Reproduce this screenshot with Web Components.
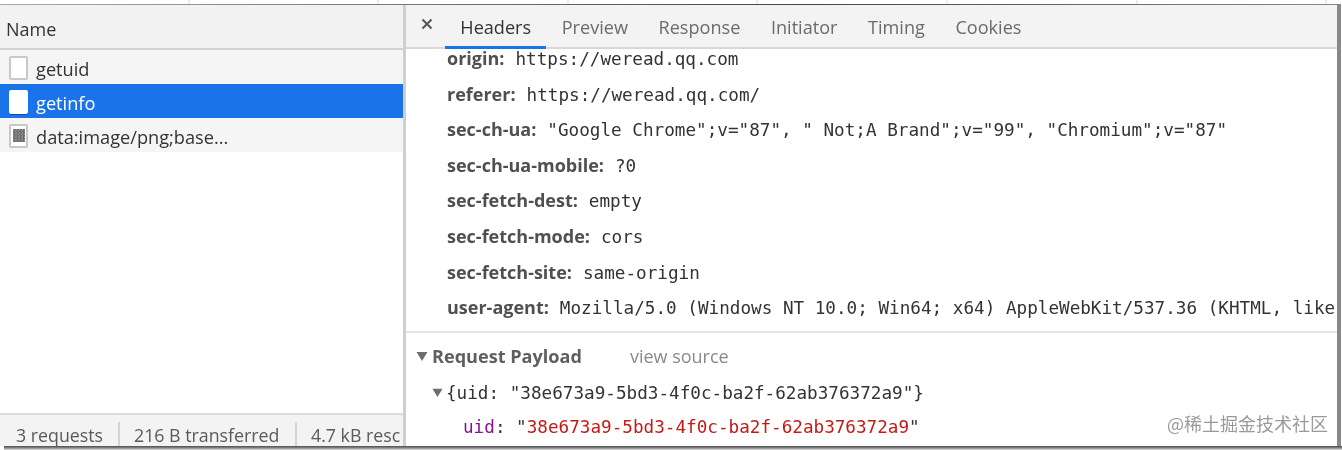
<!DOCTYPE html>
<html lang="zh"><head><meta charset="utf-8"><title>Network</title>
<style>
html,body{margin:0;padding:0;background:#fff;overflow:hidden}
body{width:1342px;height:450px;font-family:"Open Sans","Noto Sans",sans-serif}
</style></head><body>
<dt-window>
  <dt-list slot="list">
    <dt-row>getuid</dt-row>
    <dt-row selected>getinfo</dt-row>
    <dt-row kind="image">data:image/png;base...</dt-row>
  </dt-list>
  <dt-details slot="details">
    <dt-tabs></dt-tabs>
    <dt-headers>
      <dt-header name="origin">https://weread.qq.com</dt-header>
      <dt-header name="referer">https://weread.qq.com/</dt-header>
      <dt-header name="sec-ch-ua">"Google Chrome";v="87", " Not;A Brand";v="99", "Chromium";v="87"</dt-header>
      <dt-header name="sec-ch-ua-mobile">?0</dt-header>
      <dt-header name="sec-fetch-dest">empty</dt-header>
      <dt-header name="sec-fetch-mode">cors</dt-header>
      <dt-header name="sec-fetch-site">same-origin</dt-header>
      <dt-header name="user-agent">Mozilla/5.0 (Windows NT 10.0; Win64; x64) AppleWebKit/537.36 (KHTML, like</dt-header>
    </dt-headers>
    <dt-payload></dt-payload>
  </dt-details>
</dt-window>
<script>
const def=(name,html,init)=>customElements.define(name,class extends HTMLElement{
  constructor(){super();this.attachShadow({mode:'open'}).innerHTML=html;}
  connectedCallback(){init&&init.call(this,this.shadowRoot);}
});
const TRI=(s)=>`<svg width="${s}" height="${s}" viewBox="0 0 12 12"><path d="M0.5 2H11.5L6 11Z" fill="#6e6e6e"/></svg>`;

def('dt-window',`<style>
:host{display:flex;flex-direction:column;width:1342px;height:450px;position:relative;overflow:hidden;background:#fff;color:#333;filter:blur(.35px)}
.ruler{height:4px;display:flex;flex:none}
.ruler i{display:block;border-right:2px solid #ececec;height:4px;box-sizing:border-box;width:189.6px;flex:none}
.main{flex:1;min-height:0;display:flex;margin-right:1px;border-top:1px solid #d4d4d4;border-right:4px solid;border-image:linear-gradient(90deg,#aaa,#444 60%,#888) 1}
.left{width:403px;flex:none;display:flex}
.split{width:3px;flex:none;background:#cfcfcf}
.right{flex:1;min-width:0;display:flex}
.shadow{height:4px;flex:none;margin-left:4px;background:linear-gradient(#4a4a4a,#8a8a8a 50%,#e0e0e0)}
.mark{position:absolute;right:14px;top:410px;font:18px "Noto Sans CJK SC","Noto Sans",sans-serif;color:#9a9a9a;white-space:nowrap}
::slotted(*){flex:1;min-width:0}
</style>
<div class="ruler"><i></i><i></i><i></i><i></i><i></i><i></i><i></i></div>
<div class="main"><div class="left"><slot name="list"></slot></div><div class="split"></div><div class="right"><slot name="details"></slot></div></div>
<div class="shadow"></div>
<div class="mark">@稀土掘金技术社区</div>`);

def('dt-list',`<style>
:host{display:flex;flex-direction:column;background:#fff;min-width:0}
.head{height:39px;flex:none;background:#f2f2f2;border-bottom:2px solid #d2d2d2;display:flex;align-items:center;padding:4px 0 0 6px;font-size:18px;color:#333}
.rows{flex:1;min-height:0}
.foot{height:33px;flex:none;box-sizing:border-box;border-top:2px solid #dcdcdc;background:#f3f3f3;display:flex;align-items:flex-end;font-size:17.8px;line-height:27px;color:#5a5a5a;white-space:nowrap;overflow:hidden}
.foot span{box-sizing:border-box;height:24px;border-left:2px solid #d4d4d4;padding-left:14px}
.foot span:nth-child(1){width:118px;padding-left:16px;border:0}
.foot span:nth-child(2){width:177px}
.foot span:nth-child(3){flex:1}
</style>
<div class="head">Name</div><div class="rows"><slot></slot></div>
<div class="foot"><span>3 requests</span><span>216 B transferred</span><span>4.7 kB resc</span></div>`);

def('dt-row',`<style>
:host{display:flex;align-items:center;gap:8px;height:34px;box-sizing:border-box;padding:1px 0 0 9px;font-size:18.2px;background:#f5f5f5;color:#333}
:host([selected]){background:#1a73e8;color:#fff}
.ic{width:19px;height:24px;box-sizing:border-box;background:#fff;border:2px solid #c8c8c8;border-radius:2px;display:flex;align-items:center;justify-content:center;flex:none}
:host([selected]) .ic{border-color:#fff;box-shadow:0 1px 0 #0f4fa8}
.ic i{display:none;width:12px;height:13px;background:repeating-conic-gradient(#6c6c6c 0 25%,#8a8a8a 0 50%) 0 0/3px 3px}
:host([kind=image]) .ic i{display:block}
.tx{padding-top:2px}
</style><div class="ic"><i></i></div><div class="tx"><slot></slot></div>`);

def('dt-details',`<style>:host{display:flex;flex-direction:column;min-width:0;overflow:hidden;background:#fff}</style><slot></slot>`);

def('dt-tabs',`<style>
:host{display:flex;align-items:stretch;height:42px;flex:none;background:#f3f3f3;border-bottom:2px solid #d8d8d8;font-size:18.1px;color:#6b6b6b}
.x{width:39px;box-sizing:border-box;padding:0 0 4px 15px;display:flex;align-items:center}
.t{padding:2px 15.3px 0;display:flex;align-items:center;position:relative}
.on{color:#333}
.on::after{content:"";position:absolute;left:0;right:0;bottom:-2px;height:3px;background:#1a73e8}
</style>
<div class="x"><svg width="12" height="12" viewBox="0 0 12 12"><path d="M1.5 1.5L10.5 10.5M10.5 1.5L1.5 10.5" stroke="#555" stroke-width="2"/></svg></div>
<div class="t on">Headers</div><div class="t">Preview</div><div class="t">Response</div><div class="t">Initiator</div><div class="t">Timing</div><div class="t">Cookies</div>`);

def('dt-headers',`<style>
:host{display:block;height:284px;flex:none;box-sizing:border-box;padding-left:41px;border-bottom:2px solid #e4e4e4}
.scroll{margin-top:-7px}
</style><div class="scroll"><slot></slot></div>`);

def('dt-header',`<style>
:host{display:block;height:35.6px;line-height:35.6px;white-space:nowrap}
b{font:700 18px "Open Sans","Noto Sans",sans-serif;color:#505050;margin-right:11px}
span{font:17.65px "DejaVu Sans Mono",monospace;color:#333}
</style><b></b><span><slot></slot></span>`,function(r){r.querySelector('b').textContent=this.getAttribute('name')+':';});

def('dt-payload',`<style>
:host{display:block;padding:5px 0 0 10px;white-space:nowrap}
.h{display:flex;align-items:center;height:35px;gap:4px;font:700 18.1px "Open Sans",sans-serif;color:#5f5f5f}
.h em{font:400 18px "Open Sans",sans-serif;color:#8a8a8a;margin-left:44px}
.l{display:flex;align-items:center;height:35px;font:17.65px "DejaVu Sans Mono",monospace;color:#333}
.o{padding-left:16px;gap:3px;margin-top:2px}
.u{padding-left:47px;height:33px}
.k{color:#881391}.s{color:#c41a16}
</style>
<div class="h">${TRI(12)}<span>Request Payload</span><em>view source</em></div>
<div class="l o">${TRI(11)}<span>{uid: "38e673a9-5bd3-4f0c-ba2f-62ab376372a9"}</span></div>
<div class="l u"><span><span class="k">uid</span>: "<span class="s">38e673a9-5bd3-4f0c-ba2f-62ab376372a9</span>"</span></div>`);
</script>
</body></html>
